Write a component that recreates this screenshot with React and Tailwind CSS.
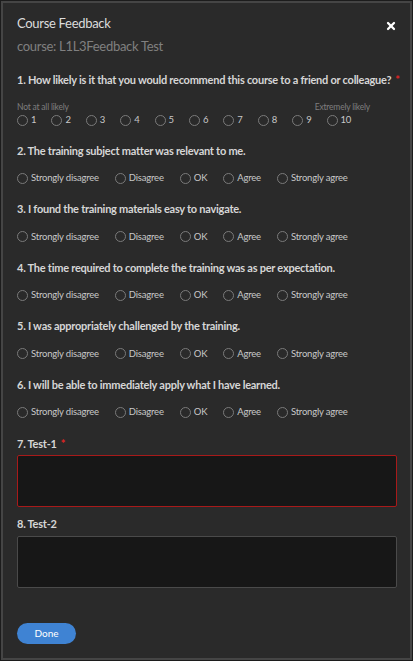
import { X } from 'lucide-react'

const LIKERT = ['Strongly disagree', 'Disagree', 'OK', 'Agree', 'Strongly agree']

const QUESTIONS = [
  '2. The training subject matter was relevant to me.',
  '3. I found the training materials easy to navigate.',
  '4. The time required to complete the training was as per expectation.',
  '5. I was appropriately challenged by the training.',
  '6. I will be able to immediately apply what I have learned.',
]

function Radio({ label }) {
  return (
    <label className="flex items-center gap-[3px] text-[9.5px] tracking-[-0.2px] text-[#c8c8c8] leading-none">
      <span className="h-[11px] w-[11px] shrink-0 rounded-full border border-[#7a7a7a]" />
      {label}
    </label>
  )
}

function QuestionTitle({ children, required }) {
  return (
    <h4 className="whitespace-nowrap text-[11px] font-bold tracking-[-0.25px] text-[#d6d6d6] leading-none">
      {children}
      {required && <span className="ml-1 text-[#e02424]">*</span>}
    </h4>
  )
}

export default function App() {
  return (
    <div className="h-[661px] w-[413px] bg-[#1c1c1c] p-px" style={{ fontFamily: 'Lato, "Noto Sans", sans-serif' }}>
      <div className="flex h-full flex-col border-2 border-[#454545] bg-[#2a2a2a] pl-[14px] pr-[13px]">
        {/* Header */}
        <div className="flex items-start justify-between pt-[11px]">
          <div>
            <h2 className="text-[13px] tracking-[-0.3px] text-[#dcdcdc] leading-[18px]">Course Feedback</h2>
            <p className="mt-[5px] text-[13px] tracking-[-0.3px] text-[#808080] leading-[18px]">course: L1L3Feedback Test</p>
          </div>
          <X size={12} strokeWidth={4.5} className="mt-[6px] text-white" />
        </div>

        {/* Q1 */}
        <div className="mt-[19px]">
          <QuestionTitle required>1. How likely is it that you would recommend this course to a friend or colleague?</QuestionTitle>
          <div className="mt-[18px] flex w-[353px] justify-between text-[8.5px] tracking-[-0.2px] text-[#7e7e7e] leading-none">
            <span>Not at all likely</span>
            <span>Extremely likely</span>
          </div>
          <div className="mt-[3px] flex">
            {[1, 2, 3, 4, 5, 6, 7, 8, 9, 10].map(n => (
              <div key={n} className="w-[34.4px]">
                <Radio label={n} />
              </div>
            ))}
          </div>
        </div>

        {/* Likert questions */}
        {QUESTIONS.map((q, i) => (
          <div key={q} className={i === 0 ? 'mt-[19px]' : 'mt-[19.5px]'}>
            <QuestionTitle>{q}</QuestionTitle>
            <div className="mt-[17px] flex gap-4">
              {LIKERT.map(l => <Radio key={l} label={l} />)}
            </div>
          </div>
        ))}

        {/* Open questions */}
        <div className="mt-[20px]">
          <QuestionTitle required>7. Test-1</QuestionTitle>
          <textarea className="mt-[6px] block h-[52px] w-full resize-none rounded-[2px] border border-[#a81a1a] bg-[#171717]" />
        </div>
        <div className="mt-[11px]">
          <QuestionTitle>8. Test-2</QuestionTitle>
          <textarea className="mt-[7px] block h-[52px] w-full resize-none rounded-[2px] border border-[#4a4a4a] bg-[#171717]" />
        </div>

        <div className="mt-[31px]">
          <button className="h-[21px] w-[59px] rounded-full bg-[#3f83d3] text-[10px] text-white">Done</button>
        </div>
      </div>
    </div>
  )
}
